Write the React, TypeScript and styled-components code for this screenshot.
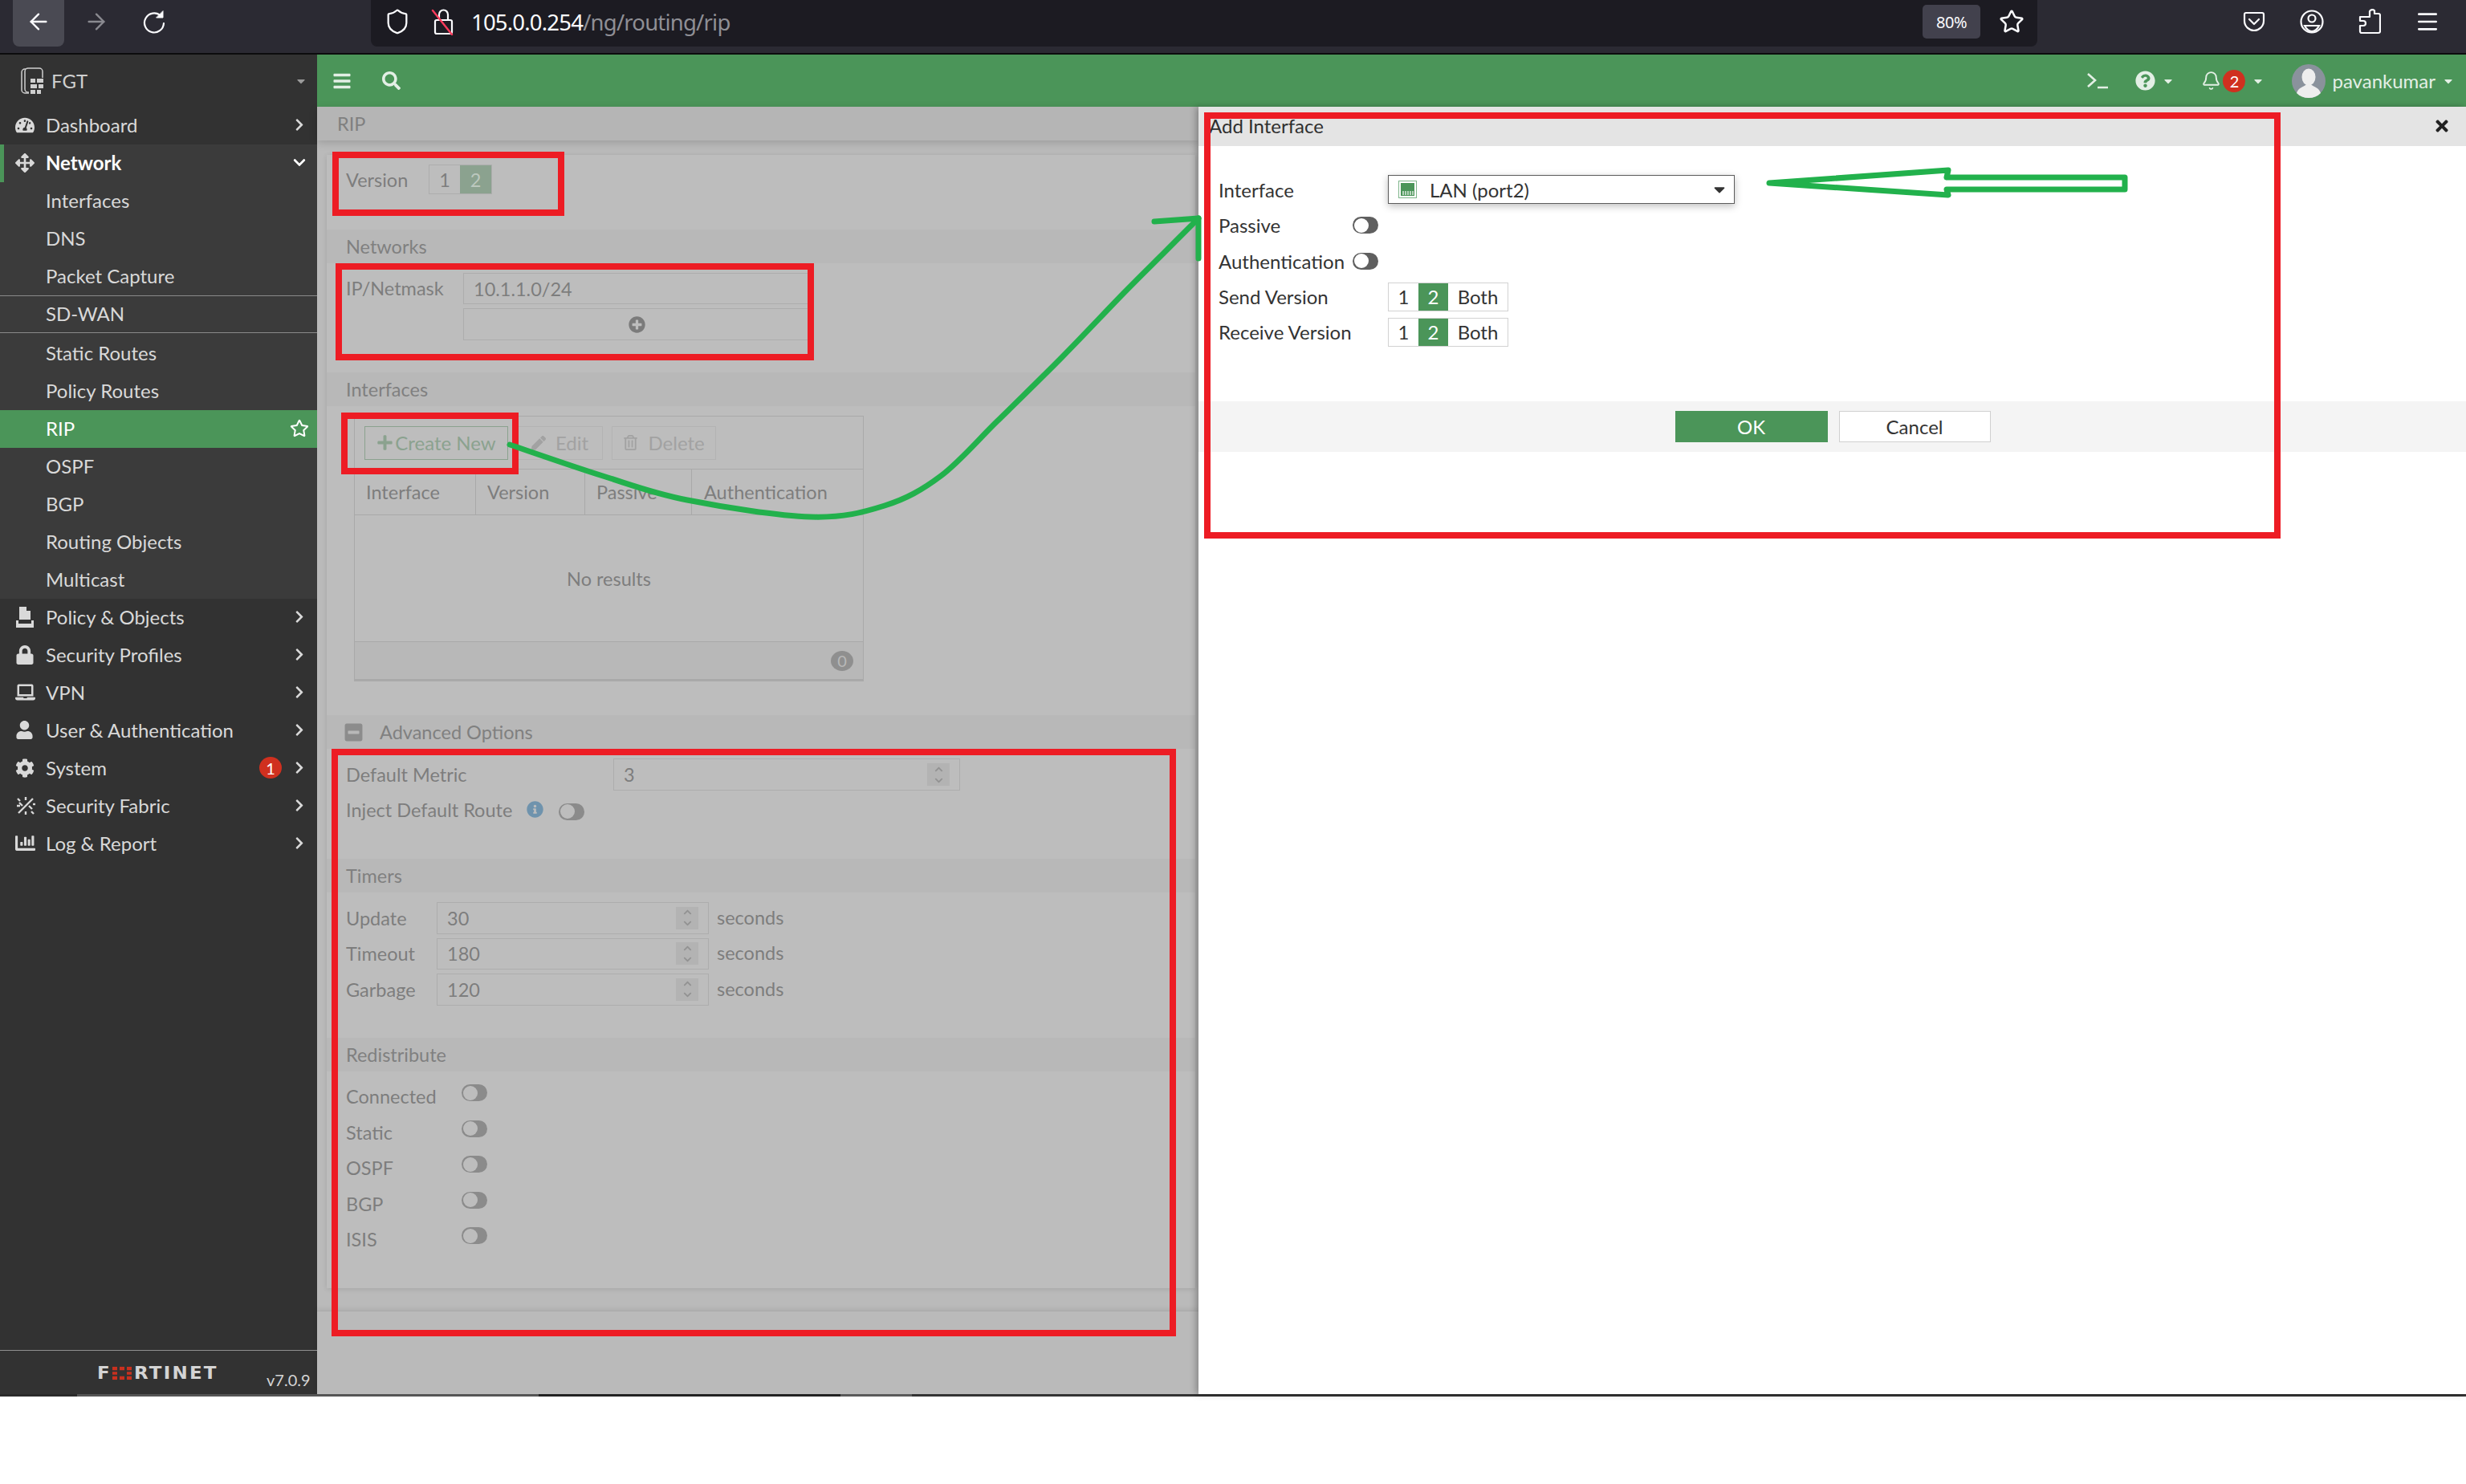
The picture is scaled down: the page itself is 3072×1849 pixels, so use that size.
import React from "react";
import styled, { createGlobalStyle } from "styled-components";
import {
  FaTachometerAlt, FaArrowsAlt, FaLock, FaLaptop, FaUser, FaCog, FaChartBar, FaChevronRight, FaChevronDown,
  FaRegStar, FaBars, FaSearch, FaPlus, FaPen, FaRegTrashAlt, FaPlusCircle, FaInfoCircle, FaMinusSquare,
  FaQuestionCircle, FaTimes, FaCaretDown, FaChevronUp,
} from "react-icons/fa";
import { ArrowLeft, ArrowRight, Shield, Star, Bell, Menu } from "lucide-react";

const Global = createGlobalStyle`
  html, body { margin: 0; padding: 0; background: #fff; }
  body { font-family: Lato, "Open Sans", sans-serif; }
  * { box-sizing: border-box; }
`;

const Page = styled.div`
  position: relative;
  width: 3072px;
  height: 1849px;
  overflow: hidden;
  background: #fff;
`;

/* Browser chrome */
const Chrome = styled.div`
  height: 68px;
  background: #2b2a33;
  border-bottom: 2px solid #0c0c0d;
  display: flex;
  color: #fbfbfe;
`;
const NavGroup = styled.div`
  width: 462px;
  display: flex;
  padding-left: 16px;
`;
const NavBtn = styled.div<{ $on?: boolean; $dim?: boolean }>`
  width: ${(p) => (p.$on ? 64 : 72)}px;
  height: 58px;
  margin-right: ${(p) => (p.$on ? 4 : 0)}px;
  padding-bottom: 4px;
  display: flex;
  align-items: center;
  justify-content: center;
  border-radius: 0 0 8px 8px;
  background: ${(p) => (p.$on ? "#4a4a53" : "transparent")};
  color: ${(p) => (p.$dim ? "#8a8a90" : "#fbfbfe")};
`;
const UrlBar = styled.div`
  width: 2076px;
  height: 58px;
  background: #1c1b22;
  border-radius: 0 0 8px 8px;
  display: flex;
  align-items: center;
  padding: 0 0 4px 14px;
`;
const UrlIcon = styled.div<{ $w: number }>`
  width: ${(p) => p.$w}px;
  display: flex;
  align-items: center;
  justify-content: center;
`;
const UrlText = styled.div`
  font-family: "Noto Sans", sans-serif;
  font-size: 27.5px;
  margin-left: -3px;
  flex: 1;
  letter-spacing: -0.8px;
  color: #fbfbfe;
  span { color: #8f8f95; }
`;
const ZoomPill = styled.div`
  width: 72px;
  height: 42px;
  margin-right: 7px;
  border-radius: 5px;
  background: #42414d;
  display: flex;
  align-items: center;
  justify-content: center;
  font-family: "Noto Sans", sans-serif;
  font-size: 20px;
  letter-spacing: -0.5px;
`;
const StarWrap = styled.div`
  width: 64px;
  display: flex;
  justify-content: center;
`;
const ToolIcons = styled.div`
  display: flex;
  margin-left: 234px;
  height: 58px;
  padding-bottom: 4px;
  align-items: center;
`;
const ToolIcon = styled.div`
  width: 72px;
  display: flex;
  justify-content: center;
`;

/* Application */
const AppArea = styled.div`
  display: flex;
  height: 1669px;
`;
const Sidebar = styled.nav`
  width: 395px;
  background: #323232;
  color: #d9d9d9;
  display: flex;
  flex-direction: column;
  font-size: 24px;
`;
const SideHead = styled.div`
  height: 65px;
  display: flex;
  align-items: center;
  padding: 0 12px 0 26px;
  font-size: 24px;
  gap: 6px;
  color: #cfcfcf;
  span { flex: 1; }
  svg:last-child { color: #9a9a9a; }
`;
const MenuRow = styled.div<{ $h?: number }>`
  height: ${(p) => p.$h ?? 47}px;
  display: flex;
  align-items: center;
  padding: 0 12px 2px 17px;
  position: relative;
  white-space: nowrap;
`;
const MenuIcon = styled.div`
  width: 40px;
  display: flex;
  align-items: center;
  padding-left: 2px;
  color: #d9d9d9;
`;
const MenuLabel = styled.div`
  flex: 1;
`;
const NetworkRow = styled(MenuRow)`
  background: #3b3b3b;
  color: #fff;
  font-weight: 700;
  border-left: 5px solid #4b9559;
  padding-left: 12px;
`;
const SubList = styled.div`
  background: #3b3b3b;
  display: flex;
  flex-direction: column;
`;
const SubRow = styled(MenuRow)<{ $div?: boolean }>`
  padding-left: 57px;
  ${(p) => (p.$div ? "border-top: 1.5px solid #8a8a8a; border-bottom: 1.5px solid #8a8a8a; margin-bottom: 2px;" : "")}
`;
const ActiveRow = styled(MenuRow)`
  padding-left: 57px;
  padding-right: 8px;
  background: #4b9559;
  color: #fff;
`;
const Chevron = styled.div`
  width: 16px;
  margin-right: 2px;
  display: flex;
  justify-content: center;
`;
const StarSlot = styled(Chevron)`
  width: 24px;
`;
const Count = styled.div`
  width: 28px;
  height: 27px;
  border-radius: 50%;
  background: #d0301f;
  color: #fff;
  font-size: 20px;
  display: flex;
  align-items: center;
  justify-content: center;
  margin-right: 14px;
`;
const SideFoot = styled.div`
  margin-top: auto;
  height: 55px;
  border-top: 1.5px solid #8f8f8f;
  display: flex;
  padding-left: 121px;
  position: relative;
`;
const Logo = styled.div`
  display: flex;
  align-items: center;
  height: 18px;
  margin-top: 19px;
  font-family: "DejaVu Sans", sans-serif;
  font-weight: 700;
  font-size: 23px;
  letter-spacing: 2.2px;
  color: #d4d4d4;
  width: 211px;
  white-space: nowrap;
  span { display: inline-block; transform: scaleY(0.92); transform-origin: left center; }
`;
const Version = styled.div`
  font-size: 20px;
  margin-top: 24px;
  color: #d4d4d4;
`;

const RightCol = styled.div`
  flex: 1;
  display: flex;
  flex-direction: column;
  min-width: 0;
`;
const GreenBar = styled.header`
  height: 65px;
  background: #4b9559;
  color: #e3efe5;
  display: flex;
  align-items: center;
  padding: 0 14px 0 19px;
  font-size: 24px;
`;
const GreenLeft = styled.div`
  display: flex;
  align-items: center;
  gap: 38px;
  flex: 1;
`;
const GreenItem = styled.div<{ $w?: number }>`
  display: flex;
  align-items: center;
  gap: 8px;
  ${(p) => (p.$w ? `width: ${p.$w}px;` : "")}
`;
const TermGlyph = styled.svg`
  display: block;
`;
const Bubble = styled.div`
  width: 28px;
  height: 28px;
  border-radius: 50%;
  background: #d0301f;
  color: #fff;
  display: flex;
  align-items: center;
  justify-content: center;
  font-size: 20px;
  margin-left: -6px;
`;
const Avatar = styled.svg`
  display: block;
`;

const Workspace = styled.div`
  flex: 1;
  display: flex;
  min-height: 0;
`;
const Main = styled.main`
  width: 1098px;
  background: #bababa;
  display: flex;
  flex-direction: column;
  color: #7d7d7d;
  font-size: 23.5px;
`;
const TitleBar = styled.div`
  height: 42px;
  background: #b5b5b5;
  padding-left: 25px;
  display: flex;
  align-items: center;
  box-shadow: 0 3px 10px rgba(0, 0, 0, 0.16);
  color: #808080;
`;
const Card = styled.div`
  margin: 18px 4px 0 12px;
  height: 1412px;
  background: #bdbdbd;
  box-shadow: 0 1px 6px rgba(0, 0, 0, 0.12);
  display: flex;
  flex-direction: column;
`;
const MainFoot = styled.div`
  margin-top: 28px;
  flex: 1;
  background: #bababa;
  border-top: 1px solid #ababab;
  box-shadow: 0 -2px 6px rgba(0, 0, 0, 0.08);
`;
const SectionHead = styled.div`
  height: 42px;
  flex: none;
  background: #b8b8b8;
  padding-left: 24px;
  display: flex;
  align-items: center;
  color: #808080;
`;
const AdvHead = styled(SectionHead)`
  padding-left: 21px;
  gap: 20px;
  svg { color: #8c8c8c; }
`;
const Block = styled.div<{ $h: number }>`
  height: ${(p) => p.$h}px;
  flex: none;
  padding: 12px 0 0 24px;
`;
const FormRow = styled.div`
  display: flex;
  align-items: center;
`;
const RowLabel = styled.div<{ $w: number }>`
  width: ${(p) => p.$w}px;
  flex: none;
`;
const TopRow = styled(FormRow)`
  align-items: flex-start;
`;
const TopLabel = styled(RowLabel)`
  line-height: 39px;
`;
const InjectRow = styled(FormRow)`
  margin-top: 10px;
`;
const Seg = styled.div`
  display: flex;
  height: 37px;
  border: 1px solid #adadad;
`;
const SegBtn = styled.div<{ $on?: boolean; $w: number }>`
  width: ${(p) => p.$w}px;
  display: flex;
  align-items: center;
  justify-content: center;
  background: ${(p) => (p.$on ? "#8ba28f" : "transparent")};
  color: ${(p) => (p.$on ? "#bcc8be" : "inherit")};
`;
const StackCol = styled.div`
  display: flex;
  flex-direction: column;
  gap: 5px;
`;
const FieldBox = styled.div<{ $w: number; $h?: number }>`
  width: ${(p) => p.$w}px;
  height: ${(p) => p.$h ?? 39}px;
  flex: none;
  border: 1.5px solid #adadad;
  display: flex;
  align-items: center;
  padding: 0 12px;
  justify-content: space-between;
`;
const AddBox = styled(FieldBox)`
  justify-content: center;
  color: #7b7b7b;
`;
const Spin = styled.div`
  width: 28px;
  height: 28px;
  background: #b3b3b3;
  display: flex;
  flex-direction: column;
  align-items: center;
  justify-content: center;
  gap: 3px;
  color: #929292;
`;
const Table = styled.div`
  margin: 12px 0 0 34px;
  width: 635px;
  height: 331px;
  border: 1.5px solid #a9a9a9;
  border-bottom-width: 3px;
  flex: none;
  display: flex;
  flex-direction: column;
`;
const Tools = styled.div`
  height: 66px;
  border-bottom: 1.5px solid #a9a9a9;
  display: flex;
  align-items: center;
  padding-left: 12px;
  gap: 11px;
`;
const ToolBtn = styled.div<{ $w: number; $green?: boolean }>`
  width: ${(p) => p.$w}px;
  height: 42px;
  border: 1.5px solid ${(p) => (p.$green ? "#8ba28f" : "#b3b3b3")};
  color: ${(p) => (p.$green ? "#8ba28f" : "#a2a2a2")};
  display: flex;
  align-items: center;
  justify-content: center;
  font-size: 24px;
  gap: ${(p) => (p.$green ? 2 : 6)}px;
`;
const THead = styled.div`
  height: 57px;
  border-bottom: 1.5px solid #a9a9a9;
  display: grid;
  grid-template-columns: 151px 136px 133px 1fr;
`;
const THCell = styled.div`
  display: flex;
  align-items: center;
  padding-left: 14px;
  border-right: 1px solid #a9a9a9;
  &:last-child { border-right: none; padding-left: 15px; }
`;
const TBody = styled.div`
  height: 158px;
  display: flex;
  align-items: center;
  justify-content: center;
  border-bottom: 1.5px solid #a9a9a9;
`;
const TFoot = styled.div`
  flex: 1;
  background: #b8b8b8;
  display: flex;
  align-items: center;
  justify-content: flex-end;
  padding-right: 12px;
`;
const Zero = styled.div`
  width: 28px;
  height: 25px;
  border-radius: 50%;
  background: #8f8f8f;
  color: #b8b8b8;
  font-size: 20px;
  display: flex;
  align-items: center;
  justify-content: center;
`;
const Gap = styled.div<{ $h: number }>`
  height: ${(p) => p.$h}px;
  flex: none;
`;
const Toggle = styled.div<{ $dark?: boolean; $lift?: number }>`
  width: 32px;
  height: 21px;
  flex: none;
  border-radius: 11px;
  background: ${(p) => (p.$dark ? "#5f5f5f" : "#8b8b8b")};
  position: relative;
  margin-bottom: ${(p) => p.$lift ?? 0}px;
  &::before {
    content: "";
    position: absolute;
    left: 1.5px;
    top: 1.5px;
    width: 18px;
    height: 18px;
    border-radius: 50%;
    background: ${(p) => (p.$dark ? "#fff" : "#bdbdbd")};
  }
`;
const InfoIcon = styled.div`
  color: #6f93ad;
  display: flex;
  margin: 0 19px 2px 18px;
`;
const TimerRows = styled.div`
  display: flex;
  flex-direction: column;
  gap: 5px;
`;
const Unit = styled.div`
  margin: 0 0 2px 10px;
`;
const RedistRows = styled.div`
  padding: 9px 0 0 24px;
`;
const RedistRow = styled(FormRow)`
  height: 44.5px;
`;

/* Slide-in panel */
const Panel = styled.aside`
  flex: 1;
  background: #fff;
  box-shadow: -3px 0 8px rgba(0, 0, 0, 0.28);
  display: flex;
  flex-direction: column;
  color: #333;
  font-size: 24px;
  position: relative;
`;
const PanelHead = styled.div`
  height: 49px;
  background: #e4e4e4;
  display: flex;
  align-items: center;
  justify-content: space-between;
  padding: 0 19px 2px 13px;
  color: #2f2f2f;
  svg { color: #222; }
`;
const PanelForm = styled.div`
  padding: 32px 0 0 25px;
  height: 318px;
  display: flex;
  flex-direction: column;
`;
const PanelRow = styled.div<{ $h: number }>`
  height: ${(p) => p.$h}px;
  display: flex;
  align-items: center;
  flex: none;
`;
const Select = styled.div`
  width: 432px;
  height: 36px;
  border: 1.5px solid #5c5c5c;
  box-shadow: 0 3px 9px rgba(0, 0, 0, 0.25);
  display: flex;
  align-items: center;
  padding: 0 7px 0 12px;
  gap: 16px;
  span { flex: 1; }
`;
const PortIcon = styled.svg`
  flex: none;
  display: block;
`;
const DlgSeg = styled.div`
  display: flex;
  height: 36px;
  border: 1.5px solid #d2d2d2;
`;
const DlgSegBtn = styled.div<{ $on?: boolean; $w: number }>`
  width: ${(p) => p.$w}px;
  display: flex;
  align-items: center;
  justify-content: center;
  background: ${(p) => (p.$on ? "#4b9559" : "#fff")};
  color: ${(p) => (p.$on ? "#fff" : "#333")};
`;
const PanelFoot = styled.div`
  height: 63px;
  background: #f4f4f4;
  display: flex;
  align-items: center;
  justify-content: center;
  gap: 14px;
  padding-left: 1px;
`;
const OkBtn = styled.div`
  width: 190px;
  height: 39px;
  background: #4b9559;
  color: #fff;
  display: flex;
  align-items: center;
  justify-content: center;
`;
const CancelBtn = styled.div`
  width: 189px;
  height: 39px;
  background: #fff;
  border: 1.5px solid #d0d0d0;
  display: flex;
  align-items: center;
  justify-content: center;
`;

/* Bottom strip: a sliver of the OS taskbar left in the capture */
const Strip = styled.div`
  height: 3px;
  display: flex;
  background: #2a2a2a;
`;
const StripPart = styled.div<{ $w: number; $c: string }>`
  width: ${(p) => p.$w}px;
  background: ${(p) => p.$c};
`;

const Annotations = styled.svg`
  position: absolute;
  left: 0;
  top: 0;
  pointer-events: none;
`;
const LogoO = styled.svg`
  vertical-align: -1px;
  margin: 0 3px 0 1px;
`;

const Chev = () => (
  <Chevron>
    <FaChevronRight size={17} />
  </Chevron>
);

const FabricIcon = () => (
  <svg width="26" height="26" viewBox="0 0 26 26" stroke="currentColor" strokeWidth="2.4" fill="none">
    <path d="M4 22 22 4M5 9l4 4M17 13l4 4M13 2v4M2 13h4M20 20l3 3M3 4l3 3M13 20v4" />
    <path d="M22 11h3" />
  </svg>
);
const PolicyIcon = () => (
  <svg width="24" height="26" viewBox="0 0 24 26" fill="currentColor">
    <path d="M5 0h9l5 5v11H5zM14 0v5h5" />
    <path d="M1 17h3v4h16v-4h3v9H1z" />
  </svg>
);
const FgtIcon = () => (
  <svg width="32" height="34" viewBox="0 0 32 34" fill="none" stroke="#cfcfcf" strokeWidth="1.5">
    <rect x="1" y="2" width="22" height="30" rx="4" />
    <rect x="5" y="1" width="22" height="30" rx="4" fill="#323232" />
    <path d="M10 13h19v20H10z" fill="#323232" stroke="none" />
    <path fill="#cfcfcf" stroke="none" d="M12 14h6v5h-6zM20 14h8v5h-8zM12 21h8v5h-8zM22 21h6v5h-6zM12 28h6v5h-6zM20 28h5v5h-5z" />
  </svg>
);
const Reload = () => (
  <svg width="30" height="32" viewBox="0 0 30 32" fill="none" stroke="#fbfbfe" strokeWidth="2.2" strokeLinecap="round">
    <path d="M23 8.5A12 12 0 1 0 27 18" />
    <path d="M26 3v8h-8z" fill="#fbfbfe" strokeWidth="1" strokeLinejoin="round" />
  </svg>
);
const Pocket = () => (
  <svg width="28" height="26" viewBox="0 0 28 26" fill="none" stroke="#fbfbfe" strokeWidth="2.2" strokeLinejoin="round" strokeLinecap="round">
    <path d="M4 2h20a2 2 0 0 1 2 2v8c0 7-6 12-12 12S2 19 2 12V4a2 2 0 0 1 2-2z" />
    <path d="M8 10l6 6 6-6" />
  </svg>
);
const Account = () => (
  <svg width="30" height="30" viewBox="0 0 30 30" fill="none" stroke="#fbfbfe" strokeWidth="2.2">
    <circle cx="15" cy="15" r="13.5" />
    <circle cx="15" cy="11" r="4.5" />
    <path d="M6 20h18c-2 4-5 7-9 7s-7-3-9-7z" />
  </svg>
);
const Puzzle = () => (
  <svg width="28" height="32" viewBox="0 0 28 32" fill="none" stroke="#fbfbfe" strokeWidth="2.2" strokeLinejoin="round">
    <path d="M14 6V4a4 4 0 0 1 6-1v4h5a2 2 0 0 1 2 2v20a2 2 0 0 1-2 2H4a2 2 0 0 1-2-2v-7h4a3 3 0 0 0 0-6H2v-5h12z" transform="translate(0 -1)" />
  </svg>
);
const SlashLock = () => (
  <svg width="30" height="34" viewBox="0 0 30 34" fill="none" strokeLinecap="round">
    <rect x="5" y="15" width="21" height="17" rx="2" stroke="#fbfbfe" strokeWidth="2.2" />
    <path d="M10 15V8a5.5 5.5 0 0 1 11 0v7" stroke="#fbfbfe" strokeWidth="2.2" />
    <path d="M2 3l24 30" stroke="#ff3b5c" strokeWidth="2.4" />
  </svg>
);

const spin = (
  <Spin>
    <FaChevronUp size={11} />
    <FaChevronDown size={11} />
  </Spin>
);

const subTop = ["Interfaces", "DNS", "Packet Capture"];
const subMid = ["Static Routes", "Policy Routes"];
const subEnd = ["OSPF", "BGP", "Routing Objects", "Multicast"];
const timers = [["Update", "30"], ["Timeout", "180"], ["Garbage", "120"]];
const redistribute = ["Connected", "Static", "OSPF", "BGP", "ISIS"];

/* Smooth hand-drawn arrow stroke through measured points */
const curvePoints: [number, number][] = [
  [635, 554], [751, 593], [856, 623], [1010, 644], [1102, 630], [1172, 593], [1242, 525], [1323, 445], [1400, 365], [1450, 315], [1493, 272],
];
function smoothPath(pts: [number, number][]) {
  let d = `M${pts[0][0]} ${pts[0][1]}`;
  for (let i = 0; i < pts.length - 1; i++) {
    const p0 = pts[Math.max(i - 1, 0)];
    const p1 = pts[i];
    const p2 = pts[i + 1];
    const p3 = pts[Math.min(i + 2, pts.length - 1)];
    d += `C${p1[0] + (p2[0] - p0[0]) / 6} ${p1[1] + (p2[1] - p0[1]) / 6} ${p2[0] - (p3[0] - p1[0]) / 6} ${p2[1] - (p3[1] - p1[1]) / 6} ${p2[0]} ${p2[1]}`;
  }
  return d;
}

export default function App() {
  return (
    <Page>
      <Global />
      <Chrome>
        <NavGroup>
          <NavBtn $on>
            <ArrowLeft size={32} strokeWidth={1.8} />
          </NavBtn>
          <NavBtn $dim>
            <ArrowRight size={32} strokeWidth={1.8} />
          </NavBtn>
          <NavBtn>
            <Reload />
          </NavBtn>
        </NavGroup>
        <UrlBar>
          <UrlIcon $w={38}>
            <Shield size={34} strokeWidth={1.6} />
          </UrlIcon>
          <UrlIcon $w={76}>
            <SlashLock />
          </UrlIcon>
          <UrlText>
            105.0.0.254<span>/ng/routing/rip</span>
          </UrlText>
          <ZoomPill>80%</ZoomPill>
          <StarWrap>
            <Star size={32} strokeWidth={1.9} />
          </StarWrap>
        </UrlBar>
        <ToolIcons>
          <ToolIcon>
            <Pocket />
          </ToolIcon>
          <ToolIcon>
            <Account />
          </ToolIcon>
          <ToolIcon>
            <Puzzle />
          </ToolIcon>
          <ToolIcon>
            <Menu size={32} strokeWidth={2} />
          </ToolIcon>
        </ToolIcons>
      </Chrome>

      <AppArea>
        <Sidebar>
          <SideHead>
            <FgtIcon />
            <span>FGT</span>
            <FaCaretDown size={16} />
          </SideHead>
          <MenuRow>
            <MenuIcon>
              <FaTachometerAlt size={24} />
            </MenuIcon>
            <MenuLabel>Dashboard</MenuLabel>
            <Chev />
          </MenuRow>
          <NetworkRow>
            <MenuIcon>
              <FaArrowsAlt size={24} />
            </MenuIcon>
            <MenuLabel>Network</MenuLabel>
            <Chevron>
              <FaChevronDown size={17} />
            </Chevron>
          </NetworkRow>
          <SubList>
            {subTop.map((s) => (
              <SubRow key={s}>{s}</SubRow>
            ))}
            <SubRow $div>SD-WAN</SubRow>
            {subMid.map((s) => (
              <SubRow key={s}>{s}</SubRow>
            ))}
            <ActiveRow>
              <MenuLabel>RIP</MenuLabel>
              <StarSlot>
                <FaRegStar size={25} />
              </StarSlot>
            </ActiveRow>
            {subEnd.map((s) => (
              <SubRow key={s}>{s}</SubRow>
            ))}
          </SubList>
          <MenuRow>
            <MenuIcon>
              <PolicyIcon />
            </MenuIcon>
            <MenuLabel>Policy &amp; Objects</MenuLabel>
            <Chev />
          </MenuRow>
          <MenuRow>
            <MenuIcon>
              <FaLock size={24} />
            </MenuIcon>
            <MenuLabel>Security Profiles</MenuLabel>
            <Chev />
          </MenuRow>
          <MenuRow>
            <MenuIcon>
              <FaLaptop size={25} />
            </MenuIcon>
            <MenuLabel>VPN</MenuLabel>
            <Chev />
          </MenuRow>
          <MenuRow>
            <MenuIcon>
              <FaUser size={23} />
            </MenuIcon>
            <MenuLabel>User &amp; Authentication</MenuLabel>
            <Chev />
          </MenuRow>
          <MenuRow>
            <MenuIcon>
              <FaCog size={24} />
            </MenuIcon>
            <MenuLabel>System</MenuLabel>
            <Count>1</Count>
            <Chev />
          </MenuRow>
          <MenuRow>
            <MenuIcon>
              <FabricIcon />
            </MenuIcon>
            <MenuLabel>Security Fabric</MenuLabel>
            <Chev />
          </MenuRow>
          <MenuRow>
            <MenuIcon>
              <FaChartBar size={25} />
            </MenuIcon>
            <MenuLabel>Log &amp; Report</MenuLabel>
            <Chev />
          </MenuRow>
          <SideFoot>
            <Logo>
              <span>
                F
                <LogoO width="24" height="18" viewBox="0 0 24 18" fill="#c9301f">
                  <path d="M0 0h6v5H0zM9 0h6v5H9zM18 0h6v5h-6zM0 7h6v4H0zM18 7h6v4h-6zM0 13h6v5H0zM9 13h6v5H9zM18 13h6v5h-6z" />
                </LogoO>
                RTINET
              </span>
            </Logo>
            <Version>v7.0.9</Version>
          </SideFoot>
        </Sidebar>

        <RightCol>
          <GreenBar>
            <GreenLeft>
              <FaBars size={24} />
              <FaSearch size={23} />
            </GreenLeft>
            <GreenItem $w={61}>
              <TermGlyph width="28" height="22" viewBox="0 0 28 22" fill="none" stroke="#e3efe5" strokeWidth="2.6">
                <path d="M2 2l9 8-9 8M14 19h13" />
              </TermGlyph>
            </GreenItem>
            <GreenItem $w={82}>
              <FaQuestionCircle size={25} />
              <FaCaretDown size={16} />
            </GreenItem>
            <GreenItem $w={113}>
              <Bell size={25} strokeWidth={1.8} />
              <Bubble>2</Bubble>
              <FaCaretDown size={16} />
            </GreenItem>
            <GreenItem>
              <Avatar width="42" height="42" viewBox="0 0 42 42">
                <circle cx="21" cy="21" r="21" fill="#8a929c" />
                <ellipse cx="21" cy="16" rx="8.5" ry="10.5" fill="#eeeeee" />
                <path d="M6 36c2-7 9-8 11-10h8c2 2 9 3 11 10-4 4-9 6-15 6s-11-2-15-6z" fill="#eeeeee" />
              </Avatar>
              <span>pavankumar</span>
              <FaCaretDown size={16} />
            </GreenItem>
          </GreenBar>

          <Workspace>
            <Main>
              <TitleBar>RIP</TitleBar>
              <Card>
                <Block $h={93}>
                  <FormRow>
                    <RowLabel $w={103}>Version</RowLabel>
                    <Seg>
                      <SegBtn $w={38}>1</SegBtn>
                      <SegBtn $w={39} $on>
                        2
                      </SegBtn>
                    </Seg>
                  </FormRow>
                </Block>
                <SectionHead>Networks</SectionHead>
                <Block $h={136}>
                  <TopRow>
                    <TopLabel $w={146}>IP/Netmask</TopLabel>
                    <StackCol>
                      <FieldBox $w={432}>10.1.1.0/24</FieldBox>
                      <AddBox $w={432} $h={40}>
                        <FaPlusCircle size={21} />
                      </AddBox>
                    </StackCol>
                  </TopRow>
                </Block>
                <SectionHead>Interfaces</SectionHead>
                <Table>
                  <Tools>
                    <ToolBtn $w={179} $green>
                      <FaPlus size={21} />
                      Create New
                    </ToolBtn>
                    <ToolBtn $w={107}>
                      <FaPen size={18} />
                      &nbsp;Edit
                    </ToolBtn>
                    <ToolBtn $w={130}>
                      <FaRegTrashAlt size={19} />
                      &nbsp;Delete
                    </ToolBtn>
                  </Tools>
                  <THead>
                    <THCell>Interface</THCell>
                    <THCell>Version</THCell>
                    <THCell>Passive</THCell>
                    <THCell>Authentication</THCell>
                  </THead>
                  <TBody>No results</TBody>
                  <TFoot>
                    <Zero>0</Zero>
                  </TFoot>
                </Table>
                <Gap $h={42} />
                <AdvHead>
                  <FaMinusSquare size={25} />
                  Advanced Options
                </AdvHead>
                <Block $h={137}>
                  <FormRow>
                    <RowLabel $w={333}>Default Metric</RowLabel>
                    <FieldBox $w={432} $h={40}>
                      3{spin}
                    </FieldBox>
                  </FormRow>
                  <InjectRow>
                    <div>Inject Default Route</div>
                    <InfoIcon>
                      <FaInfoCircle size={21} />
                    </InfoIcon>
                    <Toggle $lift={-4} />
                  </InjectRow>
                </Block>
                <SectionHead>Timers</SectionHead>
                <Block $h={181}>
                  <TimerRows>
                    {timers.map(([k, v]) => (
                      <FormRow key={k}>
                        <RowLabel $w={113}>{k}</RowLabel>
                        <FieldBox $w={339} $h={39.5}>
                          {v}
                          {spin}
                        </FieldBox>
                        <Unit>seconds</Unit>
                      </FormRow>
                    ))}
                  </TimerRows>
                </Block>
                <SectionHead>Redistribute</SectionHead>
                <RedistRows>
                  {redistribute.map((r) => (
                    <RedistRow key={r}>
                      <RowLabel $w={144}>{r}</RowLabel>
                      <Toggle $lift={9} />
                    </RedistRow>
                  ))}
                </RedistRows>
              </Card>
              <MainFoot />
            </Main>

            <Panel>
              <PanelHead>
                <span>Add Interface</span>
                <FaTimes size={22} />
              </PanelHead>
              <PanelForm>
                <PanelRow $h={44.5}>
                  <RowLabel $w={211}>Interface</RowLabel>
                  <Select>
                    <PortIcon width="23" height="22" viewBox="0 0 23 22">
                      <rect x="0.5" y="0.5" width="22" height="21" fill="#fff" stroke="#7fb58b" />
                      <path d="M3 3h17v16H3z" fill="#4b9559" />
                      <path d="M6 13v5M9 13v5M12 13v5M15 13v5M18 13v5" stroke="#fff" strokeWidth="1.2" />
                    </PortIcon>
                    <span>LAN (port2)</span>
                    <FaCaretDown size={22} color="#333" />
                  </Select>
                </PanelRow>
                <PanelRow $h={44.5}>
                  <RowLabel $w={167}>Passive</RowLabel>
                  <Toggle $dark />
                </PanelRow>
                <PanelRow $h={44.5}>
                  <RowLabel $w={167}>Authentication</RowLabel>
                  <Toggle $dark />
                </PanelRow>
                <PanelRow $h={44}>
                  <RowLabel $w={211}>Send Version</RowLabel>
                  <DlgSeg>
                    <DlgSegBtn $w={37}>1</DlgSegBtn>
                    <DlgSegBtn $w={37} $on>
                      2
                    </DlgSegBtn>
                    <DlgSegBtn $w={74}>Both</DlgSegBtn>
                  </DlgSeg>
                </PanelRow>
                <PanelRow $h={44}>
                  <RowLabel $w={211}>Receive Version</RowLabel>
                  <DlgSeg>
                    <DlgSegBtn $w={37}>1</DlgSegBtn>
                    <DlgSegBtn $w={37} $on>
                      2
                    </DlgSegBtn>
                    <DlgSegBtn $w={74}>Both</DlgSegBtn>
                  </DlgSeg>
                </PanelRow>
              </PanelForm>
              <PanelFoot>
                <OkBtn>OK</OkBtn>
                <CancelBtn>Cancel</CancelBtn>
              </PanelFoot>
            </Panel>
          </Workspace>
        </RightCol>
      </AppArea>
      <Strip>
        <StripPart $w={96} $c="#2a2a2a" />
        <StripPart $w={575} $c="#555555" />
        <StripPart $w={376} $c="#222222" />
        <StripPart $w={89} $c="#5a5a5a" />
        <StripPart $w={1936} $c="#333333" />
      </Strip>

      <Annotations width="3072" height="1849" viewBox="0 0 3072 1849" fill="none">
        <g stroke="#ed1c24" strokeWidth="8">
          <rect x="418" y="193" width="281" height="72" />
          <rect x="422" y="332" width="588" height="113" />
          <rect x="429" y="518" width="213" height="69" />
          <rect x="417" y="937" width="1044" height="724" />
          <rect x="1504" y="144" width="1333" height="523" />
        </g>
        <g stroke="#22b14c" strokeWidth="7" strokeLinecap="round" strokeLinejoin="round">
          <path d={smoothPath(curvePoints)} />
          <path d="M1438 276L1493 272M1493 272V322" />
          <path d="M2204 228L2427 212L2425 221H2647V236H2425L2427 243Z" />
        </g>
      </Annotations>
    </Page>
  );
}
